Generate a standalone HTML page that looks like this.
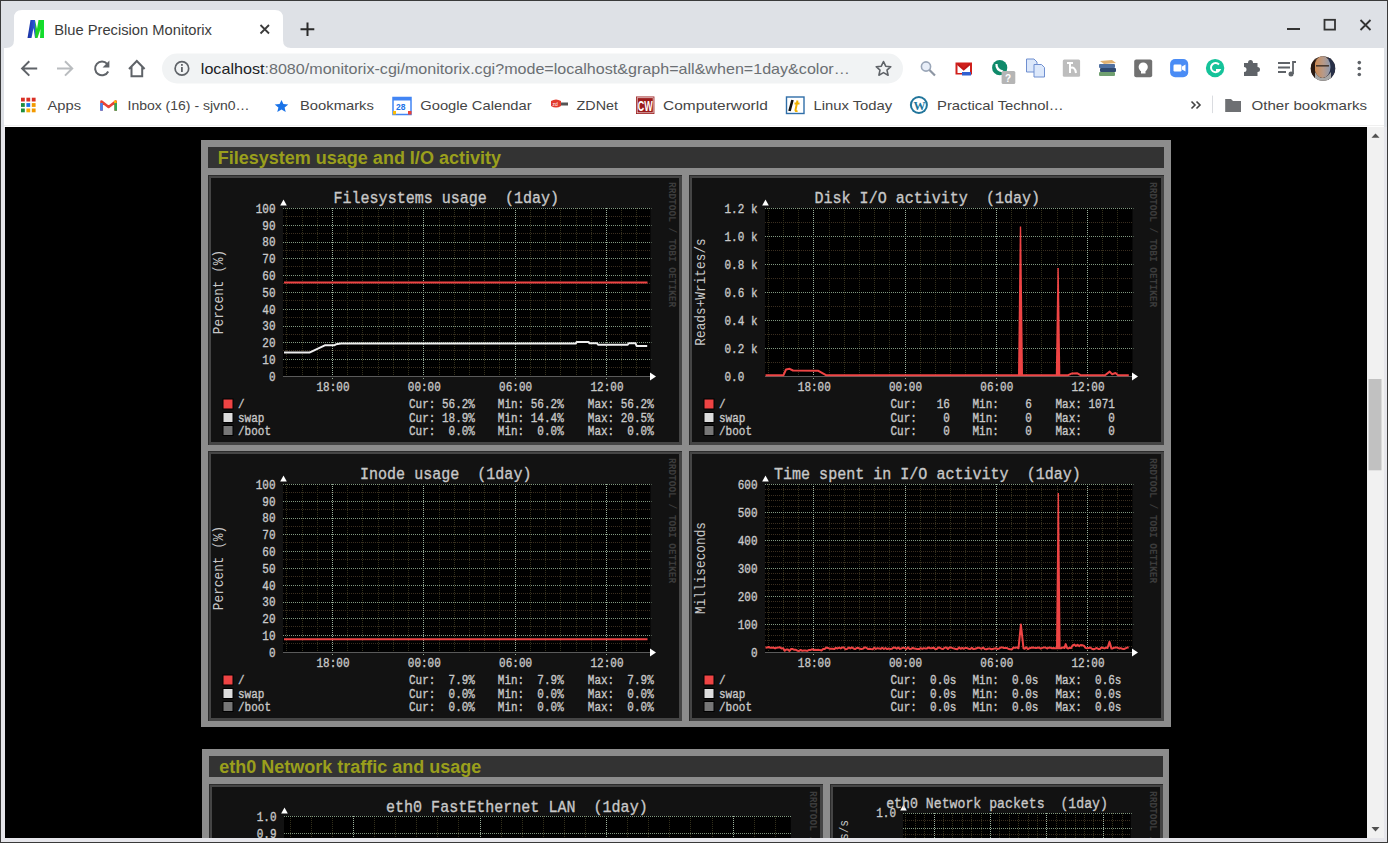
<!DOCTYPE html>
<html><head><meta charset="utf-8"><title>Blue Precision Monitorix</title>
<style>
html,body{margin:0;padding:0;width:1388px;height:843px;overflow:hidden;background:#dee1e6;}
</style></head><body>
<svg width="1388" height="843" style="position:absolute;left:0;top:0;font-family:'Liberation Sans', sans-serif">
<rect x="0" y="0" width="1388" height="843" fill="#dee1e6"/>
<rect x="1" y="127" width="4" height="716" fill="#e6e6eb"/>
<rect x="1383" y="127" width="4" height="716" fill="#e6e6eb"/>
<rect x="1" y="838" width="1386" height="4" fill="#e6e6eb"/>
<rect x="0" y="0" width="1388" height="1" fill="#3a3a3a"/>
<rect x="0" y="0" width="1" height="843" fill="#3a3a3a"/>
<rect x="1387" y="0" width="1" height="843" fill="#3a3a3a"/>
<rect x="0" y="842" width="1388" height="1" fill="#3a3a3a"/>
<rect x="4" y="48" width="1380" height="79" fill="#ffffff"/>
<rect x="4" y="125" width="1380" height="1" fill="#f0f0f0"/>
<path d="M6,48 Q14,48 14,40 L14,18 Q14,10 22,10 L275,10 Q283,10 283,18 L283,40 Q283,48 291,48 Z" fill="#ffffff"/>
<defs><linearGradient id="mg" x1="0" x2="1" y1="0" y2="0"><stop offset="0" stop-color="#1a2fa0"/><stop offset="0.45" stop-color="#2a5ad8"/><stop offset="0.5" stop-color="#20d020"/><stop offset="1" stop-color="#10e030"/></linearGradient></defs>
<path d="M27.5,38 L30.5,20 L35,20 L37,29 L38.5,20 L44,20 L44,38 L40,38 L40.5,29 L37.5,38 L35,38 L33.5,28 L31.5,38 Z" fill="url(#mg)"/>
<text x="54.2" y="35" font-size="15" fill="#3c3c3c" font-weight="normal" textLength="157.8" lengthAdjust="spacingAndGlyphs">Blue Precision Monitorix</text>
<path d="M260.5,25 L269,33.5 M269,25 L260.5,33.5" stroke="#3c3c3c" stroke-width="1.8"/>
<path d="M307.5,22.5 L307.5,36 M300.5,29.2 L314.3,29.2" stroke="#2a2a2a" stroke-width="2"/>
<rect x="1287" y="28" width="13" height="2" fill="#333"/>
<rect x="1324.5" y="19.8" width="10.5" height="9.8" fill="none" stroke="#333" stroke-width="1.8"/>
<path d="M1360.5,20 L1370.5,30 M1370.5,20 L1360.5,30" stroke="#333" stroke-width="1.8"/>
<path d="M37.2,68.4 L22.5,68.4 M29.3,61.2 L22.1,68.4 L29.3,75.6" fill="none" stroke="#5f6368" stroke-width="2"/>
<path d="M57,68.4 L71.7,68.4 M65,61.2 L72.2,68.4 L65,75.6" fill="none" stroke="#b9bcbf" stroke-width="2"/>
<path d="M107.2,63.8 A6.9,6.9 0 1 0 108.2,71.5" fill="none" stroke="#5f6368" stroke-width="2"/>
<polygon points="109.4,60.6 109.4,67.4 102.6,67.4" fill="#5f6368"/>
<path d="M129,69 L136.8,61 L144.6,69 M131.5,67 L131.5,76.2 L142.2,76.2 L142.2,67" fill="none" stroke="#5f6368" stroke-width="2"/>
<rect x="162" y="53.5" width="741" height="30" rx="15" fill="#f1f3f4"/>
<circle cx="181.9" cy="68.4" r="6.8" fill="none" stroke="#5f6368" stroke-width="1.7"/>
<rect x="181" y="67" width="1.8" height="5" fill="#5f6368"/><rect x="181" y="64" width="1.8" height="1.8" fill="#5f6368"/>
<text x="200.8" y="73.6" font-size="15" fill="#202124" font-weight="normal" textLength="63.7" lengthAdjust="spacingAndGlyphs">localhost</text>
<text x="264.5" y="73.6" font-size="15" fill="#6b6f73" font-weight="normal" textLength="585.3" lengthAdjust="spacingAndGlyphs">:8080/monitorix-cgi/monitorix.cgi?mode=localhost&amp;graph=all&amp;when=1day&amp;color…</text>
<path d="M883.5,61.5 L885.7,66.2 L890.8,66.7 L887,70.1 L888.1,75.2 L883.5,72.6 L878.9,75.2 L880,70.1 L876.2,66.7 L881.3,66.2 Z" fill="none" stroke="#5f6368" stroke-width="1.6" stroke-linejoin="round"/>
<circle cx="926" cy="66.5" r="4.6" fill="#e8eef8" stroke="#9aa6b8" stroke-width="1.6"/><path d="M929.5,70 L935,75.5" stroke="#8d96a3" stroke-width="2.2"/>
<rect x="955.5" y="62.5" width="16.5" height="12" fill="#d0201c"/><path d="M957.5,64 L963.7,69.5 L970,64 L970,73 L957.5,73 Z" fill="#ffffff"/><path d="M957.5,64 L963.7,69.5 L970,64" fill="none" stroke="#c01818" stroke-width="2"/><rect x="962" y="72" width="9" height="3.5" fill="#3060d0"/>
<circle cx="999.7" cy="67.7" r="7.6" fill="#0f8a6a"/><path d="M996.5,64 Q996,70 1003,71.5" stroke="#fff" stroke-width="2.2" fill="none"/><rect x="1001.6" y="71" width="13.7" height="12.9" rx="1.5" fill="#b5b5b5"/><text x="1005" y="81.5" font-size="10" font-weight="bold" fill="#fff">?</text>
<path d="M1026.5,59 L1034,59 L1037,62 L1037,72 L1026.5,72 Z" fill="#dce8fb" stroke="#6f8fd0" stroke-width="1"/><path d="M1034,64.5 L1041.5,64.5 L1044.5,67.5 L1044.5,77 L1034,77 Z" fill="#dce8fb" stroke="#6f8fd0" stroke-width="1"/>
<rect x="1062.8" y="59.4" width="17.3" height="17.3" rx="1.5" fill="#bdbdbd"/><path d="M1067,63 L1073,63 M1070,63 L1070,73 M1070,68 Q1075,66 1076,73" stroke="#fff" stroke-width="2" fill="none"/>
<path d="M1100,61 L1112,60 L1116,63 L1104,64 Z" fill="#e0b070"/><rect x="1099" y="64" width="16" height="4" rx="1" fill="#5070a0"/><rect x="1100" y="68" width="16" height="4" rx="1" fill="#304a70"/><rect x="1099" y="72" width="16" height="4" rx="1" fill="#70a070"/>
<rect x="1134.2" y="59.5" width="18" height="17.7" rx="2" fill="#717171"/><circle cx="1143.2" cy="67" r="4.6" fill="#fff"/><rect x="1141" y="70" width="4.5" height="3.5" fill="#fff"/>
<rect x="1170.1" y="59.1" width="18.1" height="18.1" rx="5" fill="#4a8cf5"/><rect x="1173.5" y="64.5" width="8" height="7" rx="1.2" fill="#fff"/><polygon points="1182,66.5 1185.5,64.5 1185.5,71.5 1182,69.5" fill="#fff"/>
<circle cx="1215.1" cy="68.1" r="9.2" fill="#15c39a"/><path d="M1219,64.5 A4.6,4.6 0 1 0 1219.5,70 L1216,70" fill="none" stroke="#fff" stroke-width="2"/>
<path d="M1244,63 L1248,63 Q1248,60 1250.5,60 Q1253,60 1253,63 L1257.5,63 L1257.5,67 Q1260,67 1260,69.5 Q1260,72 1257.5,72 L1257.5,76 L1244,76 L1244,72 Q1246.5,72 1246.5,69.5 Q1246.5,67 1244,67 Z" fill="#5f6368"/>
<path d="M1278,63 L1290,63 M1278,67.5 L1290,67.5 M1278,72 L1286,72" stroke="#5f6368" stroke-width="1.8"/><path d="M1293,74 L1293,62 L1296,62" stroke="#5f6368" stroke-width="1.8" fill="none"/><circle cx="1291" cy="74" r="2.5" fill="#5f6368"/>
<defs><linearGradient id="avf" x1="0" x2="1" y1="0" y2="0"><stop offset="0" stop-color="#d08a50"/><stop offset="0.55" stop-color="#b89a88"/><stop offset="1" stop-color="#8a98b0"/></linearGradient><clipPath id="avc"><circle cx="1323" cy="68.5" r="12.2"/></clipPath></defs>
<g clip-path="url(#avc)"><rect x="1310" y="56" width="26" height="26" fill="#3a2a22"/><rect x="1328" y="56" width="8" height="26" fill="#283048"/><ellipse cx="1322.5" cy="67" rx="8" ry="11" fill="url(#avf)"/><path d="M1315,72 Q1322,84 1331,72 L1331,82 L1315,82 Z" fill="#a8a8a8"/><rect x="1316" y="65" width="13" height="1.6" fill="#4a3a30"/><rect x="1310" y="56" width="5" height="26" fill="#2a1a12"/></g>
<circle cx="1359.3" cy="62.6" r="1.8" fill="#5f6368"/><circle cx="1359.3" cy="68.5" r="1.8" fill="#5f6368"/><circle cx="1359.3" cy="74.5" r="1.8" fill="#5f6368"/>
<rect x="21.0" y="97.7" width="3.8" height="3.8" fill="#d93025"/>
<rect x="26.4" y="97.7" width="3.8" height="3.8" fill="#d93025"/>
<rect x="31.8" y="97.7" width="3.8" height="3.8" fill="#d93025"/>
<rect x="21.0" y="103.1" width="3.8" height="3.8" fill="#1e8e3e"/>
<rect x="26.4" y="103.1" width="3.8" height="3.8" fill="#1a73e8"/>
<rect x="31.8" y="103.1" width="3.8" height="3.8" fill="#f29900"/>
<rect x="21.0" y="108.5" width="3.8" height="3.8" fill="#1e8e3e"/>
<rect x="26.4" y="108.5" width="3.8" height="3.8" fill="#f9ab00"/>
<rect x="31.8" y="108.5" width="3.8" height="3.8" fill="#f29900"/>
<text x="47.5" y="110.4" font-size="13.4" fill="#454545" font-weight="normal" textLength="33.5" lengthAdjust="spacingAndGlyphs">Apps</text>
<path d="M101.5,110.7 L101.5,101.5 L108.6,107 L115.7,101.5 L115.7,110.7" fill="none" stroke="#ea4335" stroke-width="2.6" stroke-linejoin="round"/><path d="M101.5,110.7 L101.5,103" stroke="#4285f4" stroke-width="2.6"/><path d="M115.7,110.7 L115.7,103" stroke="#34a853" stroke-width="2.6"/><path d="M114,102 L116.5,101.5" stroke="#fbbc04" stroke-width="2.6"/>
<text x="127.5" y="110.4" font-size="13.4" fill="#454545" font-weight="normal" textLength="122.1" lengthAdjust="spacingAndGlyphs">Inbox (16) - sjvn0…</text>
<path d="M281.5,99.9 L283.4,104 L288.3,104.4 L284.6,107.5 L285.7,112 L281.5,109.6 L277.3,112 L278.4,107.5 L274.7,104.4 L279.6,104 Z" fill="#1a73e8"/>
<text x="300" y="110.4" font-size="13.4" fill="#454545" font-weight="normal" textLength="73.9" lengthAdjust="spacingAndGlyphs">Bookmarks</text>
<rect x="393" y="97.5" width="18" height="17" fill="#ffffff" stroke="#4285f4" stroke-width="1.5"/><rect x="393" y="97.5" width="18" height="3" fill="#4285f4"/><rect x="408" y="111" width="3.5" height="3.5" fill="#ea4335"/><rect x="393" y="111" width="3" height="3.5" fill="#fbbc04"/><text x="396" y="110" font-size="8.5" fill="#1a73e8" font-weight="bold">28</text>
<text x="420.3" y="110.4" font-size="13.4" fill="#454545" font-weight="normal" textLength="111.3" lengthAdjust="spacingAndGlyphs">Google Calendar</text>
<path d="M551,101 Q556,98 561,101 L561,106 Q556,109 551,106 Z" fill="#e23b2e"/><rect x="561" y="102.5" width="7" height="3" fill="#555"/><text x="552.5" y="105.5" font-size="5" fill="#fff">zd</text>
<text x="576.6" y="110.4" font-size="13.4" fill="#454545" font-weight="normal" textLength="41.4" lengthAdjust="spacingAndGlyphs">ZDNet</text>
<rect x="636" y="96.5" width="18.4" height="17.5" fill="#9b1c1c"/><rect x="637.2" y="97.7" width="16" height="15.1" fill="none" stroke="#e8d0d0" stroke-width="0.8"/><text x="637.8" y="111.3" font-size="14.5" font-weight="bold" fill="#fff" textLength="14.8" lengthAdjust="spacingAndGlyphs">CW</text>
<text x="663" y="110.4" font-size="13.4" fill="#454545" font-weight="normal" textLength="104.8" lengthAdjust="spacingAndGlyphs">Computerworld</text>
<rect x="786.5" y="97" width="17.5" height="16.5" fill="#fff" stroke="#2f6ea8" stroke-width="1.4"/><path d="M792.5,100 L789.5,111" stroke="#111" stroke-width="2.6"/><path d="M797.5,100.5 L795.5,110 Q795.2,111.5 797.5,111 M794.5,103.5 L799.5,103.5" stroke="#f0b000" stroke-width="2" fill="none"/>
<text x="813.4" y="110.4" font-size="13.4" fill="#454545" font-weight="normal" textLength="78.9" lengthAdjust="spacingAndGlyphs">Linux Today</text>
<circle cx="918.9" cy="105" r="9" fill="#21759b"/><circle cx="918.9" cy="105" r="7" fill="#fff"/><text x="913.5" y="109.6" font-size="12" font-weight="bold" fill="#21759b" font-family='"Liberation Serif", serif'>W</text>
<text x="937" y="110.4" font-size="13.4" fill="#454545" font-weight="normal" textLength="126.5" lengthAdjust="spacingAndGlyphs">Practical Technol…</text>
<path d="M1191.5,101.5 L1195,105 L1191.5,108.5 M1196.5,101.5 L1200,105 L1196.5,108.5" fill="none" stroke="#454545" stroke-width="1.6"/>
<rect x="1212" y="95.6" width="1" height="17.5" fill="#dadce0"/>
<path d="M1225.2,99 L1231,99 L1233,101 L1241,101 L1241,112 L1225.2,112 Z" fill="#6e7073"/>
<text x="1251.6" y="110.4" font-size="13.4" fill="#454545" font-weight="normal" textLength="115.4" lengthAdjust="spacingAndGlyphs">Other bookmarks</text>
<rect x="1367" y="127" width="17" height="711" fill="#f1f1f1"/>
<rect x="1368.5" y="379" width="13" height="91.3" fill="#c1c1c1"/>
<polygon points="1371.5,137.8 1375.5,133.5 1379.5,137.8" fill="#505050"/>
<polygon points="1371.5,827 1379.5,827 1375.5,831.5" fill="#505050"/>
</svg>
<svg width="1362" height="711" viewBox="5 127 1362 711" style="position:absolute;left:5px;top:127px;font-family:'Liberation Mono', monospace">
<rect x="5" y="127" width="1362" height="711" fill="#000000" />
<rect x="201" y="140" width="970" height="587" fill="#8c8c8c" />
<rect x="208" y="147" width="956" height="21" fill="#333333" />
<text x="217.8" y="164" font-family="'Liberation Sans', sans-serif" font-weight="bold" font-size="18" fill="#9a9f1c">Filesystem usage and I/O activity</text>
<rect x="208" y="175" width="474" height="270" fill="#2c2c2c" />
<rect x="209" y="176" width="473" height="269" fill="#454545" />
<rect x="211" y="178" width="468" height="264" fill="#121212" />
<rect x="283" y="208" width="367.5" height="169" fill="#000000" />
<line x1="283" y1="367.5" x2="650.5" y2="367.5" stroke="#3a2e20" stroke-dasharray="1 1"/>
<line x1="283" y1="350.5" x2="650.5" y2="350.5" stroke="#3a2e20" stroke-dasharray="1 1"/>
<line x1="283" y1="334.5" x2="650.5" y2="334.5" stroke="#3a2e20" stroke-dasharray="1 1"/>
<line x1="283" y1="317.5" x2="650.5" y2="317.5" stroke="#3a2e20" stroke-dasharray="1 1"/>
<line x1="283" y1="300.5" x2="650.5" y2="300.5" stroke="#3a2e20" stroke-dasharray="1 1"/>
<line x1="283" y1="283.5" x2="650.5" y2="283.5" stroke="#3a2e20" stroke-dasharray="1 1"/>
<line x1="283" y1="266.5" x2="650.5" y2="266.5" stroke="#3a2e20" stroke-dasharray="1 1"/>
<line x1="283" y1="250.5" x2="650.5" y2="250.5" stroke="#3a2e20" stroke-dasharray="1 1"/>
<line x1="283" y1="233.5" x2="650.5" y2="233.5" stroke="#3a2e20" stroke-dasharray="1 1"/>
<line x1="283" y1="216.5" x2="650.5" y2="216.5" stroke="#3a2e20" stroke-dasharray="1 1"/>
<line x1="286.5" y1="208" x2="286.5" y2="377" stroke="#33301c" stroke-dasharray="1 1"/>
<line x1="302.5" y1="208" x2="302.5" y2="377" stroke="#33301c" stroke-dasharray="1 1"/>
<line x1="317.5" y1="208" x2="317.5" y2="377" stroke="#33301c" stroke-dasharray="1 1"/>
<line x1="332.5" y1="208" x2="332.5" y2="377" stroke="#33301c" stroke-dasharray="1 1"/>
<line x1="347.5" y1="208" x2="347.5" y2="377" stroke="#33301c" stroke-dasharray="1 1"/>
<line x1="362.5" y1="208" x2="362.5" y2="377" stroke="#33301c" stroke-dasharray="1 1"/>
<line x1="378.5" y1="208" x2="378.5" y2="377" stroke="#33301c" stroke-dasharray="1 1"/>
<line x1="393.5" y1="208" x2="393.5" y2="377" stroke="#33301c" stroke-dasharray="1 1"/>
<line x1="408.5" y1="208" x2="408.5" y2="377" stroke="#33301c" stroke-dasharray="1 1"/>
<line x1="423.5" y1="208" x2="423.5" y2="377" stroke="#33301c" stroke-dasharray="1 1"/>
<line x1="439.5" y1="208" x2="439.5" y2="377" stroke="#33301c" stroke-dasharray="1 1"/>
<line x1="454.5" y1="208" x2="454.5" y2="377" stroke="#33301c" stroke-dasharray="1 1"/>
<line x1="469.5" y1="208" x2="469.5" y2="377" stroke="#33301c" stroke-dasharray="1 1"/>
<line x1="484.5" y1="208" x2="484.5" y2="377" stroke="#33301c" stroke-dasharray="1 1"/>
<line x1="499.5" y1="208" x2="499.5" y2="377" stroke="#33301c" stroke-dasharray="1 1"/>
<line x1="515.5" y1="208" x2="515.5" y2="377" stroke="#33301c" stroke-dasharray="1 1"/>
<line x1="530.5" y1="208" x2="530.5" y2="377" stroke="#33301c" stroke-dasharray="1 1"/>
<line x1="545.5" y1="208" x2="545.5" y2="377" stroke="#33301c" stroke-dasharray="1 1"/>
<line x1="560.5" y1="208" x2="560.5" y2="377" stroke="#33301c" stroke-dasharray="1 1"/>
<line x1="576.5" y1="208" x2="576.5" y2="377" stroke="#33301c" stroke-dasharray="1 1"/>
<line x1="591.5" y1="208" x2="591.5" y2="377" stroke="#33301c" stroke-dasharray="1 1"/>
<line x1="606.5" y1="208" x2="606.5" y2="377" stroke="#33301c" stroke-dasharray="1 1"/>
<line x1="621.5" y1="208" x2="621.5" y2="377" stroke="#33301c" stroke-dasharray="1 1"/>
<line x1="636.5" y1="208" x2="636.5" y2="377" stroke="#33301c" stroke-dasharray="1 1"/>
<line x1="332.5" y1="208" x2="332.5" y2="380" stroke="#9cb09c" stroke-dasharray="1 1"/>
<line x1="423.5" y1="208" x2="423.5" y2="380" stroke="#9cb09c" stroke-dasharray="1 1"/>
<line x1="515.5" y1="208" x2="515.5" y2="380" stroke="#9cb09c" stroke-dasharray="1 1"/>
<line x1="606.5" y1="208" x2="606.5" y2="380" stroke="#9cb09c" stroke-dasharray="1 1"/>
<line x1="283" y1="359.5" x2="651.5" y2="359.5" stroke="#7f967f" stroke-dasharray="1 1"/>
<line x1="283" y1="342.5" x2="651.5" y2="342.5" stroke="#7f967f" stroke-dasharray="1 1"/>
<line x1="283" y1="326.5" x2="651.5" y2="326.5" stroke="#7f967f" stroke-dasharray="1 1"/>
<line x1="283" y1="309.5" x2="651.5" y2="309.5" stroke="#7f967f" stroke-dasharray="1 1"/>
<line x1="283" y1="292.5" x2="651.5" y2="292.5" stroke="#7f967f" stroke-dasharray="1 1"/>
<line x1="283" y1="275.5" x2="651.5" y2="275.5" stroke="#7f967f" stroke-dasharray="1 1"/>
<line x1="283" y1="258.5" x2="651.5" y2="258.5" stroke="#7f967f" stroke-dasharray="1 1"/>
<line x1="283" y1="242.5" x2="651.5" y2="242.5" stroke="#7f967f" stroke-dasharray="1 1"/>
<line x1="283" y1="225.5" x2="651.5" y2="225.5" stroke="#7f967f" stroke-dasharray="1 1"/>
<line x1="283" y1="208.5" x2="651.5" y2="208.5" stroke="#7f967f" stroke-dasharray="1 1"/>
<line x1="283" y1="376.5" x2="650.5" y2="376.5" stroke="#5a5a5a"/>
<polygon points="650.0,372.5 656.0,376.5 650.0,380.5" fill="#ffffff"/>
<polygon points="280.2,205.5 283.5,199.5 286.8,205.5" fill="#ffffff"/>
<text transform="translate(275.5,380.7) scale(1,1.15)" font-size="11.0" fill="#c8c8c8" stroke="#c8c8c8" stroke-width="0.3" text-anchor="end" xml:space="preserve">0</text>
<text transform="translate(275.5,363.9) scale(1,1.15)" font-size="11.0" fill="#c8c8c8" stroke="#c8c8c8" stroke-width="0.3" text-anchor="end" xml:space="preserve">10</text>
<text transform="translate(275.5,347.09999999999997) scale(1,1.15)" font-size="11.0" fill="#c8c8c8" stroke="#c8c8c8" stroke-width="0.3" text-anchor="end" xml:space="preserve">20</text>
<text transform="translate(275.5,330.3) scale(1,1.15)" font-size="11.0" fill="#c8c8c8" stroke="#c8c8c8" stroke-width="0.3" text-anchor="end" xml:space="preserve">30</text>
<text transform="translate(275.5,313.5) scale(1,1.15)" font-size="11.0" fill="#c8c8c8" stroke="#c8c8c8" stroke-width="0.3" text-anchor="end" xml:space="preserve">40</text>
<text transform="translate(275.5,296.7) scale(1,1.15)" font-size="11.0" fill="#c8c8c8" stroke="#c8c8c8" stroke-width="0.3" text-anchor="end" xml:space="preserve">50</text>
<text transform="translate(275.5,279.9) scale(1,1.15)" font-size="11.0" fill="#c8c8c8" stroke="#c8c8c8" stroke-width="0.3" text-anchor="end" xml:space="preserve">60</text>
<text transform="translate(275.5,263.09999999999997) scale(1,1.15)" font-size="11.0" fill="#c8c8c8" stroke="#c8c8c8" stroke-width="0.3" text-anchor="end" xml:space="preserve">70</text>
<text transform="translate(275.5,246.29999999999998) scale(1,1.15)" font-size="11.0" fill="#c8c8c8" stroke="#c8c8c8" stroke-width="0.3" text-anchor="end" xml:space="preserve">80</text>
<text transform="translate(275.5,229.49999999999997) scale(1,1.15)" font-size="11.0" fill="#c8c8c8" stroke="#c8c8c8" stroke-width="0.3" text-anchor="end" xml:space="preserve">90</text>
<text transform="translate(275.5,212.7) scale(1,1.15)" font-size="11.0" fill="#c8c8c8" stroke="#c8c8c8" stroke-width="0.3" text-anchor="end" xml:space="preserve">100</text>
<text transform="translate(333.0,390.6) scale(1,1.15)" font-size="11.0" fill="#c8c8c8" stroke="#c8c8c8" stroke-width="0.3" text-anchor="middle" xml:space="preserve">18:00</text>
<text transform="translate(424.3,390.6) scale(1,1.15)" font-size="11.0" fill="#c8c8c8" stroke="#c8c8c8" stroke-width="0.3" text-anchor="middle" xml:space="preserve">00:00</text>
<text transform="translate(515.6,390.6) scale(1,1.15)" font-size="11.0" fill="#c8c8c8" stroke="#c8c8c8" stroke-width="0.3" text-anchor="middle" xml:space="preserve">06:00</text>
<text transform="translate(607.0,390.6) scale(1,1.15)" font-size="11.0" fill="#c8c8c8" stroke="#c8c8c8" stroke-width="0.3" text-anchor="middle" xml:space="preserve">12:00</text>
<text transform="translate(333.5,202.8) scale(1,1.15)" font-size="15.05" fill="#c8c8c8" stroke="#c8c8c8" stroke-width="0.3" text-anchor="start" xml:space="preserve">Filesystems usage  (1day)</text>
<text transform="translate(222.5,292) rotate(-90) scale(1,1.12)" font-size="12.8" fill="#c8c8c8" text-anchor="middle">Percent (%)</text>
<text transform="translate(669,182) rotate(90) scale(1,1.1)" font-size="9.5" font-weight="bold" fill="#3c3c3c">RRDTOOL / TOBI OETIKER</text>
<path d="M284.0,282.6 L647.5,282.6" fill="none" stroke="#ee4444" stroke-width="2" stroke-linejoin="round"/>
<path d="M284.0,352.6 L309.4,352.6 L324.8,345.3 L334.1,345.3 L336.0,344.3 L341.0,343.5 L575.8,343.5 L576.8,341.9 L588.5,341.9 L589.5,343.3 L597.1,343.3 L598.1,344.8 L627.7,344.8 L628.7,343.3 L635.6,343.3 L636.6,345.9 L647.2,345.9" fill="none" stroke="#eeeeee" stroke-width="2" stroke-linejoin="round"/>
<rect x="222.5" y="398.5" width="11" height="11" fill="#000000" />
<rect x="223.5" y="399.5" width="9" height="9" fill="#ee4444" />
<text transform="translate(238,408) scale(1,1.15)" font-size="11.0" fill="#c8c8c8" stroke="#c8c8c8" stroke-width="0.3" text-anchor="start" xml:space="preserve">/</text>
<text transform="translate(409,408) scale(1,1.15)" font-size="11.0" fill="#c8c8c8" stroke="#c8c8c8" stroke-width="0.3" text-anchor="start" xml:space="preserve">Cur: 56.2%</text>
<text transform="translate(497.8,408) scale(1,1.15)" font-size="11.0" fill="#c8c8c8" stroke="#c8c8c8" stroke-width="0.3" text-anchor="start" xml:space="preserve">Min: 56.2%</text>
<text transform="translate(587.8,408) scale(1,1.15)" font-size="11.0" fill="#c8c8c8" stroke="#c8c8c8" stroke-width="0.3" text-anchor="start" xml:space="preserve">Max: 56.2%</text>
<rect x="222.5" y="412.0" width="11" height="11" fill="#000000" />
<rect x="223.5" y="413.0" width="9" height="9" fill="#dddddd" />
<text transform="translate(238,421.5) scale(1,1.15)" font-size="11.0" fill="#c8c8c8" stroke="#c8c8c8" stroke-width="0.3" text-anchor="start" xml:space="preserve">swap</text>
<text transform="translate(409,421.5) scale(1,1.15)" font-size="11.0" fill="#c8c8c8" stroke="#c8c8c8" stroke-width="0.3" text-anchor="start" xml:space="preserve">Cur: 18.9%</text>
<text transform="translate(497.8,421.5) scale(1,1.15)" font-size="11.0" fill="#c8c8c8" stroke="#c8c8c8" stroke-width="0.3" text-anchor="start" xml:space="preserve">Min: 14.4%</text>
<text transform="translate(587.8,421.5) scale(1,1.15)" font-size="11.0" fill="#c8c8c8" stroke="#c8c8c8" stroke-width="0.3" text-anchor="start" xml:space="preserve">Max: 20.5%</text>
<rect x="222.5" y="425.0" width="11" height="11" fill="#000000" />
<rect x="223.5" y="426.0" width="9" height="9" fill="#777777" />
<text transform="translate(238,434.5) scale(1,1.15)" font-size="11.0" fill="#c8c8c8" stroke="#c8c8c8" stroke-width="0.3" text-anchor="start" xml:space="preserve">/boot</text>
<text transform="translate(409,434.5) scale(1,1.15)" font-size="11.0" fill="#c8c8c8" stroke="#c8c8c8" stroke-width="0.3" text-anchor="start" xml:space="preserve">Cur:  0.0%</text>
<text transform="translate(497.8,434.5) scale(1,1.15)" font-size="11.0" fill="#c8c8c8" stroke="#c8c8c8" stroke-width="0.3" text-anchor="start" xml:space="preserve">Min:  0.0%</text>
<text transform="translate(587.8,434.5) scale(1,1.15)" font-size="11.0" fill="#c8c8c8" stroke="#c8c8c8" stroke-width="0.3" text-anchor="start" xml:space="preserve">Max:  0.0%</text>
<rect x="208" y="451" width="474" height="270" fill="#2c2c2c" />
<rect x="209" y="452" width="473" height="269" fill="#454545" />
<rect x="211" y="454" width="468" height="264" fill="#121212" />
<rect x="283" y="484" width="367.5" height="169" fill="#000000" />
<line x1="283" y1="643.5" x2="650.5" y2="643.5" stroke="#3a2e20" stroke-dasharray="1 1"/>
<line x1="283" y1="626.5" x2="650.5" y2="626.5" stroke="#3a2e20" stroke-dasharray="1 1"/>
<line x1="283" y1="610.5" x2="650.5" y2="610.5" stroke="#3a2e20" stroke-dasharray="1 1"/>
<line x1="283" y1="593.5" x2="650.5" y2="593.5" stroke="#3a2e20" stroke-dasharray="1 1"/>
<line x1="283" y1="576.5" x2="650.5" y2="576.5" stroke="#3a2e20" stroke-dasharray="1 1"/>
<line x1="283" y1="559.5" x2="650.5" y2="559.5" stroke="#3a2e20" stroke-dasharray="1 1"/>
<line x1="283" y1="542.5" x2="650.5" y2="542.5" stroke="#3a2e20" stroke-dasharray="1 1"/>
<line x1="283" y1="526.5" x2="650.5" y2="526.5" stroke="#3a2e20" stroke-dasharray="1 1"/>
<line x1="283" y1="509.5" x2="650.5" y2="509.5" stroke="#3a2e20" stroke-dasharray="1 1"/>
<line x1="283" y1="492.5" x2="650.5" y2="492.5" stroke="#3a2e20" stroke-dasharray="1 1"/>
<line x1="286.5" y1="484" x2="286.5" y2="653" stroke="#33301c" stroke-dasharray="1 1"/>
<line x1="302.5" y1="484" x2="302.5" y2="653" stroke="#33301c" stroke-dasharray="1 1"/>
<line x1="317.5" y1="484" x2="317.5" y2="653" stroke="#33301c" stroke-dasharray="1 1"/>
<line x1="332.5" y1="484" x2="332.5" y2="653" stroke="#33301c" stroke-dasharray="1 1"/>
<line x1="347.5" y1="484" x2="347.5" y2="653" stroke="#33301c" stroke-dasharray="1 1"/>
<line x1="362.5" y1="484" x2="362.5" y2="653" stroke="#33301c" stroke-dasharray="1 1"/>
<line x1="378.5" y1="484" x2="378.5" y2="653" stroke="#33301c" stroke-dasharray="1 1"/>
<line x1="393.5" y1="484" x2="393.5" y2="653" stroke="#33301c" stroke-dasharray="1 1"/>
<line x1="408.5" y1="484" x2="408.5" y2="653" stroke="#33301c" stroke-dasharray="1 1"/>
<line x1="423.5" y1="484" x2="423.5" y2="653" stroke="#33301c" stroke-dasharray="1 1"/>
<line x1="439.5" y1="484" x2="439.5" y2="653" stroke="#33301c" stroke-dasharray="1 1"/>
<line x1="454.5" y1="484" x2="454.5" y2="653" stroke="#33301c" stroke-dasharray="1 1"/>
<line x1="469.5" y1="484" x2="469.5" y2="653" stroke="#33301c" stroke-dasharray="1 1"/>
<line x1="484.5" y1="484" x2="484.5" y2="653" stroke="#33301c" stroke-dasharray="1 1"/>
<line x1="499.5" y1="484" x2="499.5" y2="653" stroke="#33301c" stroke-dasharray="1 1"/>
<line x1="515.5" y1="484" x2="515.5" y2="653" stroke="#33301c" stroke-dasharray="1 1"/>
<line x1="530.5" y1="484" x2="530.5" y2="653" stroke="#33301c" stroke-dasharray="1 1"/>
<line x1="545.5" y1="484" x2="545.5" y2="653" stroke="#33301c" stroke-dasharray="1 1"/>
<line x1="560.5" y1="484" x2="560.5" y2="653" stroke="#33301c" stroke-dasharray="1 1"/>
<line x1="576.5" y1="484" x2="576.5" y2="653" stroke="#33301c" stroke-dasharray="1 1"/>
<line x1="591.5" y1="484" x2="591.5" y2="653" stroke="#33301c" stroke-dasharray="1 1"/>
<line x1="606.5" y1="484" x2="606.5" y2="653" stroke="#33301c" stroke-dasharray="1 1"/>
<line x1="621.5" y1="484" x2="621.5" y2="653" stroke="#33301c" stroke-dasharray="1 1"/>
<line x1="636.5" y1="484" x2="636.5" y2="653" stroke="#33301c" stroke-dasharray="1 1"/>
<line x1="332.5" y1="484" x2="332.5" y2="656" stroke="#9cb09c" stroke-dasharray="1 1"/>
<line x1="423.5" y1="484" x2="423.5" y2="656" stroke="#9cb09c" stroke-dasharray="1 1"/>
<line x1="515.5" y1="484" x2="515.5" y2="656" stroke="#9cb09c" stroke-dasharray="1 1"/>
<line x1="606.5" y1="484" x2="606.5" y2="656" stroke="#9cb09c" stroke-dasharray="1 1"/>
<line x1="283" y1="635.5" x2="651.5" y2="635.5" stroke="#7f967f" stroke-dasharray="1 1"/>
<line x1="283" y1="618.5" x2="651.5" y2="618.5" stroke="#7f967f" stroke-dasharray="1 1"/>
<line x1="283" y1="602.5" x2="651.5" y2="602.5" stroke="#7f967f" stroke-dasharray="1 1"/>
<line x1="283" y1="585.5" x2="651.5" y2="585.5" stroke="#7f967f" stroke-dasharray="1 1"/>
<line x1="283" y1="568.5" x2="651.5" y2="568.5" stroke="#7f967f" stroke-dasharray="1 1"/>
<line x1="283" y1="551.5" x2="651.5" y2="551.5" stroke="#7f967f" stroke-dasharray="1 1"/>
<line x1="283" y1="534.5" x2="651.5" y2="534.5" stroke="#7f967f" stroke-dasharray="1 1"/>
<line x1="283" y1="518.5" x2="651.5" y2="518.5" stroke="#7f967f" stroke-dasharray="1 1"/>
<line x1="283" y1="501.5" x2="651.5" y2="501.5" stroke="#7f967f" stroke-dasharray="1 1"/>
<line x1="283" y1="484.5" x2="651.5" y2="484.5" stroke="#7f967f" stroke-dasharray="1 1"/>
<line x1="283" y1="652.5" x2="650.5" y2="652.5" stroke="#5a5a5a"/>
<polygon points="650.0,648.5 656.0,652.5 650.0,656.5" fill="#ffffff"/>
<polygon points="280.2,481.5 283.5,475.5 286.8,481.5" fill="#ffffff"/>
<text transform="translate(275.5,656.7) scale(1,1.15)" font-size="11.0" fill="#c8c8c8" stroke="#c8c8c8" stroke-width="0.3" text-anchor="end" xml:space="preserve">0</text>
<text transform="translate(275.5,639.9000000000001) scale(1,1.15)" font-size="11.0" fill="#c8c8c8" stroke="#c8c8c8" stroke-width="0.3" text-anchor="end" xml:space="preserve">10</text>
<text transform="translate(275.5,623.1) scale(1,1.15)" font-size="11.0" fill="#c8c8c8" stroke="#c8c8c8" stroke-width="0.3" text-anchor="end" xml:space="preserve">20</text>
<text transform="translate(275.5,606.3000000000001) scale(1,1.15)" font-size="11.0" fill="#c8c8c8" stroke="#c8c8c8" stroke-width="0.3" text-anchor="end" xml:space="preserve">30</text>
<text transform="translate(275.5,589.5) scale(1,1.15)" font-size="11.0" fill="#c8c8c8" stroke="#c8c8c8" stroke-width="0.3" text-anchor="end" xml:space="preserve">40</text>
<text transform="translate(275.5,572.7) scale(1,1.15)" font-size="11.0" fill="#c8c8c8" stroke="#c8c8c8" stroke-width="0.3" text-anchor="end" xml:space="preserve">50</text>
<text transform="translate(275.5,555.9000000000001) scale(1,1.15)" font-size="11.0" fill="#c8c8c8" stroke="#c8c8c8" stroke-width="0.3" text-anchor="end" xml:space="preserve">60</text>
<text transform="translate(275.5,539.1) scale(1,1.15)" font-size="11.0" fill="#c8c8c8" stroke="#c8c8c8" stroke-width="0.3" text-anchor="end" xml:space="preserve">70</text>
<text transform="translate(275.5,522.3000000000001) scale(1,1.15)" font-size="11.0" fill="#c8c8c8" stroke="#c8c8c8" stroke-width="0.3" text-anchor="end" xml:space="preserve">80</text>
<text transform="translate(275.5,505.49999999999994) scale(1,1.15)" font-size="11.0" fill="#c8c8c8" stroke="#c8c8c8" stroke-width="0.3" text-anchor="end" xml:space="preserve">90</text>
<text transform="translate(275.5,488.7) scale(1,1.15)" font-size="11.0" fill="#c8c8c8" stroke="#c8c8c8" stroke-width="0.3" text-anchor="end" xml:space="preserve">100</text>
<text transform="translate(333.0,666.6) scale(1,1.15)" font-size="11.0" fill="#c8c8c8" stroke="#c8c8c8" stroke-width="0.3" text-anchor="middle" xml:space="preserve">18:00</text>
<text transform="translate(424.3,666.6) scale(1,1.15)" font-size="11.0" fill="#c8c8c8" stroke="#c8c8c8" stroke-width="0.3" text-anchor="middle" xml:space="preserve">00:00</text>
<text transform="translate(515.6,666.6) scale(1,1.15)" font-size="11.0" fill="#c8c8c8" stroke="#c8c8c8" stroke-width="0.3" text-anchor="middle" xml:space="preserve">06:00</text>
<text transform="translate(607.0,666.6) scale(1,1.15)" font-size="11.0" fill="#c8c8c8" stroke="#c8c8c8" stroke-width="0.3" text-anchor="middle" xml:space="preserve">12:00</text>
<text transform="translate(360,478.8) scale(1,1.15)" font-size="15.05" fill="#c8c8c8" stroke="#c8c8c8" stroke-width="0.3" text-anchor="start" xml:space="preserve">Inode usage  (1day)</text>
<text transform="translate(222.5,568) rotate(-90) scale(1,1.12)" font-size="12.8" fill="#c8c8c8" text-anchor="middle">Percent (%)</text>
<text transform="translate(669,458) rotate(90) scale(1,1.1)" font-size="9.5" font-weight="bold" fill="#3c3c3c">RRDTOOL / TOBI OETIKER</text>
<path d="M284.0,639.2 L647.5,639.2" fill="none" stroke="#ee4444" stroke-width="2" stroke-linejoin="round"/>
<rect x="222.5" y="674.5" width="11" height="11" fill="#000000" />
<rect x="223.5" y="675.5" width="9" height="9" fill="#ee4444" />
<text transform="translate(238,684) scale(1,1.15)" font-size="11.0" fill="#c8c8c8" stroke="#c8c8c8" stroke-width="0.3" text-anchor="start" xml:space="preserve">/</text>
<text transform="translate(409,684) scale(1,1.15)" font-size="11.0" fill="#c8c8c8" stroke="#c8c8c8" stroke-width="0.3" text-anchor="start" xml:space="preserve">Cur:  7.9%</text>
<text transform="translate(497.8,684) scale(1,1.15)" font-size="11.0" fill="#c8c8c8" stroke="#c8c8c8" stroke-width="0.3" text-anchor="start" xml:space="preserve">Min:  7.9%</text>
<text transform="translate(587.8,684) scale(1,1.15)" font-size="11.0" fill="#c8c8c8" stroke="#c8c8c8" stroke-width="0.3" text-anchor="start" xml:space="preserve">Max:  7.9%</text>
<rect x="222.5" y="688.0" width="11" height="11" fill="#000000" />
<rect x="223.5" y="689.0" width="9" height="9" fill="#dddddd" />
<text transform="translate(238,697.5) scale(1,1.15)" font-size="11.0" fill="#c8c8c8" stroke="#c8c8c8" stroke-width="0.3" text-anchor="start" xml:space="preserve">swap</text>
<text transform="translate(409,697.5) scale(1,1.15)" font-size="11.0" fill="#c8c8c8" stroke="#c8c8c8" stroke-width="0.3" text-anchor="start" xml:space="preserve">Cur:  0.0%</text>
<text transform="translate(497.8,697.5) scale(1,1.15)" font-size="11.0" fill="#c8c8c8" stroke="#c8c8c8" stroke-width="0.3" text-anchor="start" xml:space="preserve">Min:  0.0%</text>
<text transform="translate(587.8,697.5) scale(1,1.15)" font-size="11.0" fill="#c8c8c8" stroke="#c8c8c8" stroke-width="0.3" text-anchor="start" xml:space="preserve">Max:  0.0%</text>
<rect x="222.5" y="701.0" width="11" height="11" fill="#000000" />
<rect x="223.5" y="702.0" width="9" height="9" fill="#777777" />
<text transform="translate(238,710.5) scale(1,1.15)" font-size="11.0" fill="#c8c8c8" stroke="#c8c8c8" stroke-width="0.3" text-anchor="start" xml:space="preserve">/boot</text>
<text transform="translate(409,710.5) scale(1,1.15)" font-size="11.0" fill="#c8c8c8" stroke="#c8c8c8" stroke-width="0.3" text-anchor="start" xml:space="preserve">Cur:  0.0%</text>
<text transform="translate(497.8,710.5) scale(1,1.15)" font-size="11.0" fill="#c8c8c8" stroke="#c8c8c8" stroke-width="0.3" text-anchor="start" xml:space="preserve">Min:  0.0%</text>
<text transform="translate(587.8,710.5) scale(1,1.15)" font-size="11.0" fill="#c8c8c8" stroke="#c8c8c8" stroke-width="0.3" text-anchor="start" xml:space="preserve">Max:  0.0%</text>
<rect x="689" y="175" width="475" height="270" fill="#2c2c2c" />
<rect x="690" y="176" width="474" height="269" fill="#454545" />
<rect x="692" y="178" width="469" height="264" fill="#121212" />
<rect x="765" y="208" width="367.5" height="169" fill="#000000" />
<line x1="765" y1="362.5" x2="1132.5" y2="362.5" stroke="#3a2e20" stroke-dasharray="1 1"/>
<line x1="765" y1="334.5" x2="1132.5" y2="334.5" stroke="#3a2e20" stroke-dasharray="1 1"/>
<line x1="765" y1="306.5" x2="1132.5" y2="306.5" stroke="#3a2e20" stroke-dasharray="1 1"/>
<line x1="765" y1="278.5" x2="1132.5" y2="278.5" stroke="#3a2e20" stroke-dasharray="1 1"/>
<line x1="765" y1="250.5" x2="1132.5" y2="250.5" stroke="#3a2e20" stroke-dasharray="1 1"/>
<line x1="765" y1="222.5" x2="1132.5" y2="222.5" stroke="#3a2e20" stroke-dasharray="1 1"/>
<line x1="768.5" y1="208" x2="768.5" y2="377" stroke="#33301c" stroke-dasharray="1 1"/>
<line x1="783.5" y1="208" x2="783.5" y2="377" stroke="#33301c" stroke-dasharray="1 1"/>
<line x1="798.5" y1="208" x2="798.5" y2="377" stroke="#33301c" stroke-dasharray="1 1"/>
<line x1="813.5" y1="208" x2="813.5" y2="377" stroke="#33301c" stroke-dasharray="1 1"/>
<line x1="829.5" y1="208" x2="829.5" y2="377" stroke="#33301c" stroke-dasharray="1 1"/>
<line x1="844.5" y1="208" x2="844.5" y2="377" stroke="#33301c" stroke-dasharray="1 1"/>
<line x1="859.5" y1="208" x2="859.5" y2="377" stroke="#33301c" stroke-dasharray="1 1"/>
<line x1="874.5" y1="208" x2="874.5" y2="377" stroke="#33301c" stroke-dasharray="1 1"/>
<line x1="889.5" y1="208" x2="889.5" y2="377" stroke="#33301c" stroke-dasharray="1 1"/>
<line x1="905.5" y1="208" x2="905.5" y2="377" stroke="#33301c" stroke-dasharray="1 1"/>
<line x1="920.5" y1="208" x2="920.5" y2="377" stroke="#33301c" stroke-dasharray="1 1"/>
<line x1="935.5" y1="208" x2="935.5" y2="377" stroke="#33301c" stroke-dasharray="1 1"/>
<line x1="950.5" y1="208" x2="950.5" y2="377" stroke="#33301c" stroke-dasharray="1 1"/>
<line x1="965.5" y1="208" x2="965.5" y2="377" stroke="#33301c" stroke-dasharray="1 1"/>
<line x1="981.5" y1="208" x2="981.5" y2="377" stroke="#33301c" stroke-dasharray="1 1"/>
<line x1="996.5" y1="208" x2="996.5" y2="377" stroke="#33301c" stroke-dasharray="1 1"/>
<line x1="1011.5" y1="208" x2="1011.5" y2="377" stroke="#33301c" stroke-dasharray="1 1"/>
<line x1="1026.5" y1="208" x2="1026.5" y2="377" stroke="#33301c" stroke-dasharray="1 1"/>
<line x1="1041.5" y1="208" x2="1041.5" y2="377" stroke="#33301c" stroke-dasharray="1 1"/>
<line x1="1057.5" y1="208" x2="1057.5" y2="377" stroke="#33301c" stroke-dasharray="1 1"/>
<line x1="1072.5" y1="208" x2="1072.5" y2="377" stroke="#33301c" stroke-dasharray="1 1"/>
<line x1="1087.5" y1="208" x2="1087.5" y2="377" stroke="#33301c" stroke-dasharray="1 1"/>
<line x1="1102.5" y1="208" x2="1102.5" y2="377" stroke="#33301c" stroke-dasharray="1 1"/>
<line x1="1117.5" y1="208" x2="1117.5" y2="377" stroke="#33301c" stroke-dasharray="1 1"/>
<line x1="813.5" y1="208" x2="813.5" y2="380" stroke="#9cb09c" stroke-dasharray="1 1"/>
<line x1="905.5" y1="208" x2="905.5" y2="380" stroke="#9cb09c" stroke-dasharray="1 1"/>
<line x1="996.5" y1="208" x2="996.5" y2="380" stroke="#9cb09c" stroke-dasharray="1 1"/>
<line x1="1087.5" y1="208" x2="1087.5" y2="380" stroke="#9cb09c" stroke-dasharray="1 1"/>
<line x1="765" y1="348.5" x2="1133.5" y2="348.5" stroke="#7f967f" stroke-dasharray="1 1"/>
<line x1="765" y1="320.5" x2="1133.5" y2="320.5" stroke="#7f967f" stroke-dasharray="1 1"/>
<line x1="765" y1="292.5" x2="1133.5" y2="292.5" stroke="#7f967f" stroke-dasharray="1 1"/>
<line x1="765" y1="264.5" x2="1133.5" y2="264.5" stroke="#7f967f" stroke-dasharray="1 1"/>
<line x1="765" y1="236.5" x2="1133.5" y2="236.5" stroke="#7f967f" stroke-dasharray="1 1"/>
<line x1="765" y1="208.5" x2="1133.5" y2="208.5" stroke="#7f967f" stroke-dasharray="1 1"/>
<line x1="765" y1="376.5" x2="1132.5" y2="376.5" stroke="#5a5a5a"/>
<polygon points="1132.0,372.5 1138.0,376.5 1132.0,380.5" fill="#ffffff"/>
<polygon points="762.2,205.5 765.5,199.5 768.8,205.5" fill="#ffffff"/>
<text transform="translate(757.5,380.7) scale(1,1.15)" font-size="11.0" fill="#c8c8c8" stroke="#c8c8c8" stroke-width="0.3" text-anchor="end" xml:space="preserve">0.0  </text>
<text transform="translate(757.5,352.7) scale(1,1.15)" font-size="11.0" fill="#c8c8c8" stroke="#c8c8c8" stroke-width="0.3" text-anchor="end" xml:space="preserve">0.2 k</text>
<text transform="translate(757.5,324.7) scale(1,1.15)" font-size="11.0" fill="#c8c8c8" stroke="#c8c8c8" stroke-width="0.3" text-anchor="end" xml:space="preserve">0.4 k</text>
<text transform="translate(757.5,296.7) scale(1,1.15)" font-size="11.0" fill="#c8c8c8" stroke="#c8c8c8" stroke-width="0.3" text-anchor="end" xml:space="preserve">0.6 k</text>
<text transform="translate(757.5,268.7) scale(1,1.15)" font-size="11.0" fill="#c8c8c8" stroke="#c8c8c8" stroke-width="0.3" text-anchor="end" xml:space="preserve">0.8 k</text>
<text transform="translate(757.5,240.7) scale(1,1.15)" font-size="11.0" fill="#c8c8c8" stroke="#c8c8c8" stroke-width="0.3" text-anchor="end" xml:space="preserve">1.0 k</text>
<text transform="translate(757.5,212.7) scale(1,1.15)" font-size="11.0" fill="#c8c8c8" stroke="#c8c8c8" stroke-width="0.3" text-anchor="end" xml:space="preserve">1.2 k</text>
<text transform="translate(814.3,390.6) scale(1,1.15)" font-size="11.0" fill="#c8c8c8" stroke="#c8c8c8" stroke-width="0.3" text-anchor="middle" xml:space="preserve">18:00</text>
<text transform="translate(905.5,390.6) scale(1,1.15)" font-size="11.0" fill="#c8c8c8" stroke="#c8c8c8" stroke-width="0.3" text-anchor="middle" xml:space="preserve">00:00</text>
<text transform="translate(996.8,390.6) scale(1,1.15)" font-size="11.0" fill="#c8c8c8" stroke="#c8c8c8" stroke-width="0.3" text-anchor="middle" xml:space="preserve">06:00</text>
<text transform="translate(1088.0,390.6) scale(1,1.15)" font-size="11.0" fill="#c8c8c8" stroke="#c8c8c8" stroke-width="0.3" text-anchor="middle" xml:space="preserve">12:00</text>
<text transform="translate(814.5,202.8) scale(1,1.15)" font-size="15.05" fill="#c8c8c8" stroke="#c8c8c8" stroke-width="0.3" text-anchor="start" xml:space="preserve">Disk I/O activity  (1day)</text>
<text transform="translate(704.5,292) rotate(-90) scale(1,1.12)" font-size="12.8" fill="#c8c8c8" text-anchor="middle">Reads+Writes/s</text>
<text transform="translate(1150,182) rotate(90) scale(1,1.1)" font-size="9.5" font-weight="bold" fill="#3c3c3c">RRDTOOL / TOBI OETIKER</text>
<path d="M765.5,375.2 L783.5,375.2 L786.0,369.5 L789.6,368.8 L793.0,370.5 L818.4,370.8 L826.0,375.2 L900.0,375.2 L1018.5,375.2 L1022.5,375.2 L1056.0,375.2 L1060.0,375.2 L1068.2,375.2 L1072.0,373.4 L1077.0,373.2 L1080.5,375.2 L1105.0,375.2 L1109.7,371.6 L1112.0,374.2 L1115.5,373.0 L1118.0,375.2 L1128.8,375.2" fill="none" stroke="#ee4444" stroke-width="2" stroke-linejoin="round"/>
<rect x="703.5" y="398.5" width="11" height="11" fill="#000000" />
<rect x="704.5" y="399.5" width="9" height="9" fill="#ee4444" />
<text transform="translate(719,408) scale(1,1.15)" font-size="11.0" fill="#c8c8c8" stroke="#c8c8c8" stroke-width="0.3" text-anchor="start" xml:space="preserve">/</text>
<text transform="translate(890.5,408) scale(1,1.15)" font-size="11.0" fill="#c8c8c8" stroke="#c8c8c8" stroke-width="0.3" text-anchor="start" xml:space="preserve">Cur:   16</text>
<text transform="translate(972.5,408) scale(1,1.15)" font-size="11.0" fill="#c8c8c8" stroke="#c8c8c8" stroke-width="0.3" text-anchor="start" xml:space="preserve">Min:    6</text>
<text transform="translate(1055.5,408) scale(1,1.15)" font-size="11.0" fill="#c8c8c8" stroke="#c8c8c8" stroke-width="0.3" text-anchor="start" xml:space="preserve">Max: 1071</text>
<rect x="703.5" y="412.0" width="11" height="11" fill="#000000" />
<rect x="704.5" y="413.0" width="9" height="9" fill="#dddddd" />
<text transform="translate(719,421.5) scale(1,1.15)" font-size="11.0" fill="#c8c8c8" stroke="#c8c8c8" stroke-width="0.3" text-anchor="start" xml:space="preserve">swap</text>
<text transform="translate(890.5,421.5) scale(1,1.15)" font-size="11.0" fill="#c8c8c8" stroke="#c8c8c8" stroke-width="0.3" text-anchor="start" xml:space="preserve">Cur:    0</text>
<text transform="translate(972.5,421.5) scale(1,1.15)" font-size="11.0" fill="#c8c8c8" stroke="#c8c8c8" stroke-width="0.3" text-anchor="start" xml:space="preserve">Min:    0</text>
<text transform="translate(1055.5,421.5) scale(1,1.15)" font-size="11.0" fill="#c8c8c8" stroke="#c8c8c8" stroke-width="0.3" text-anchor="start" xml:space="preserve">Max:    0</text>
<rect x="703.5" y="425.0" width="11" height="11" fill="#000000" />
<rect x="704.5" y="426.0" width="9" height="9" fill="#777777" />
<text transform="translate(719,434.5) scale(1,1.15)" font-size="11.0" fill="#c8c8c8" stroke="#c8c8c8" stroke-width="0.3" text-anchor="start" xml:space="preserve">/boot</text>
<text transform="translate(890.5,434.5) scale(1,1.15)" font-size="11.0" fill="#c8c8c8" stroke="#c8c8c8" stroke-width="0.3" text-anchor="start" xml:space="preserve">Cur:    0</text>
<text transform="translate(972.5,434.5) scale(1,1.15)" font-size="11.0" fill="#c8c8c8" stroke="#c8c8c8" stroke-width="0.3" text-anchor="start" xml:space="preserve">Min:    0</text>
<text transform="translate(1055.5,434.5) scale(1,1.15)" font-size="11.0" fill="#c8c8c8" stroke="#c8c8c8" stroke-width="0.3" text-anchor="start" xml:space="preserve">Max:    0</text>
<polygon points="1018,376 1019.8,226.5 1021.2,226.5 1023,376" fill="#ee4444"/>
<polygon points="1055.8,376 1057.4,268 1058.8,268 1060.3,376" fill="#ee4444"/>
<rect x="689" y="451" width="475" height="270" fill="#2c2c2c" />
<rect x="690" y="452" width="474" height="269" fill="#454545" />
<rect x="692" y="454" width="469" height="264" fill="#121212" />
<rect x="765" y="484" width="367.5" height="169" fill="#000000" />
<line x1="765" y1="646.5" x2="1132.5" y2="646.5" stroke="#3a2e20" stroke-dasharray="1 1"/>
<line x1="765" y1="640.5" x2="1132.5" y2="640.5" stroke="#3a2e20" stroke-dasharray="1 1"/>
<line x1="765" y1="635.5" x2="1132.5" y2="635.5" stroke="#3a2e20" stroke-dasharray="1 1"/>
<line x1="765" y1="629.5" x2="1132.5" y2="629.5" stroke="#3a2e20" stroke-dasharray="1 1"/>
<line x1="765" y1="618.5" x2="1132.5" y2="618.5" stroke="#3a2e20" stroke-dasharray="1 1"/>
<line x1="765" y1="612.5" x2="1132.5" y2="612.5" stroke="#3a2e20" stroke-dasharray="1 1"/>
<line x1="765" y1="607.5" x2="1132.5" y2="607.5" stroke="#3a2e20" stroke-dasharray="1 1"/>
<line x1="765" y1="601.5" x2="1132.5" y2="601.5" stroke="#3a2e20" stroke-dasharray="1 1"/>
<line x1="765" y1="590.5" x2="1132.5" y2="590.5" stroke="#3a2e20" stroke-dasharray="1 1"/>
<line x1="765" y1="584.5" x2="1132.5" y2="584.5" stroke="#3a2e20" stroke-dasharray="1 1"/>
<line x1="765" y1="579.5" x2="1132.5" y2="579.5" stroke="#3a2e20" stroke-dasharray="1 1"/>
<line x1="765" y1="573.5" x2="1132.5" y2="573.5" stroke="#3a2e20" stroke-dasharray="1 1"/>
<line x1="765" y1="562.5" x2="1132.5" y2="562.5" stroke="#3a2e20" stroke-dasharray="1 1"/>
<line x1="765" y1="556.5" x2="1132.5" y2="556.5" stroke="#3a2e20" stroke-dasharray="1 1"/>
<line x1="765" y1="551.5" x2="1132.5" y2="551.5" stroke="#3a2e20" stroke-dasharray="1 1"/>
<line x1="765" y1="545.5" x2="1132.5" y2="545.5" stroke="#3a2e20" stroke-dasharray="1 1"/>
<line x1="765" y1="534.5" x2="1132.5" y2="534.5" stroke="#3a2e20" stroke-dasharray="1 1"/>
<line x1="765" y1="528.5" x2="1132.5" y2="528.5" stroke="#3a2e20" stroke-dasharray="1 1"/>
<line x1="765" y1="523.5" x2="1132.5" y2="523.5" stroke="#3a2e20" stroke-dasharray="1 1"/>
<line x1="765" y1="517.5" x2="1132.5" y2="517.5" stroke="#3a2e20" stroke-dasharray="1 1"/>
<line x1="765" y1="506.5" x2="1132.5" y2="506.5" stroke="#3a2e20" stroke-dasharray="1 1"/>
<line x1="765" y1="500.5" x2="1132.5" y2="500.5" stroke="#3a2e20" stroke-dasharray="1 1"/>
<line x1="765" y1="495.5" x2="1132.5" y2="495.5" stroke="#3a2e20" stroke-dasharray="1 1"/>
<line x1="765" y1="489.5" x2="1132.5" y2="489.5" stroke="#3a2e20" stroke-dasharray="1 1"/>
<line x1="768.5" y1="484" x2="768.5" y2="653" stroke="#33301c" stroke-dasharray="1 1"/>
<line x1="783.5" y1="484" x2="783.5" y2="653" stroke="#33301c" stroke-dasharray="1 1"/>
<line x1="798.5" y1="484" x2="798.5" y2="653" stroke="#33301c" stroke-dasharray="1 1"/>
<line x1="813.5" y1="484" x2="813.5" y2="653" stroke="#33301c" stroke-dasharray="1 1"/>
<line x1="829.5" y1="484" x2="829.5" y2="653" stroke="#33301c" stroke-dasharray="1 1"/>
<line x1="844.5" y1="484" x2="844.5" y2="653" stroke="#33301c" stroke-dasharray="1 1"/>
<line x1="859.5" y1="484" x2="859.5" y2="653" stroke="#33301c" stroke-dasharray="1 1"/>
<line x1="874.5" y1="484" x2="874.5" y2="653" stroke="#33301c" stroke-dasharray="1 1"/>
<line x1="889.5" y1="484" x2="889.5" y2="653" stroke="#33301c" stroke-dasharray="1 1"/>
<line x1="905.5" y1="484" x2="905.5" y2="653" stroke="#33301c" stroke-dasharray="1 1"/>
<line x1="920.5" y1="484" x2="920.5" y2="653" stroke="#33301c" stroke-dasharray="1 1"/>
<line x1="935.5" y1="484" x2="935.5" y2="653" stroke="#33301c" stroke-dasharray="1 1"/>
<line x1="950.5" y1="484" x2="950.5" y2="653" stroke="#33301c" stroke-dasharray="1 1"/>
<line x1="965.5" y1="484" x2="965.5" y2="653" stroke="#33301c" stroke-dasharray="1 1"/>
<line x1="981.5" y1="484" x2="981.5" y2="653" stroke="#33301c" stroke-dasharray="1 1"/>
<line x1="996.5" y1="484" x2="996.5" y2="653" stroke="#33301c" stroke-dasharray="1 1"/>
<line x1="1011.5" y1="484" x2="1011.5" y2="653" stroke="#33301c" stroke-dasharray="1 1"/>
<line x1="1026.5" y1="484" x2="1026.5" y2="653" stroke="#33301c" stroke-dasharray="1 1"/>
<line x1="1041.5" y1="484" x2="1041.5" y2="653" stroke="#33301c" stroke-dasharray="1 1"/>
<line x1="1057.5" y1="484" x2="1057.5" y2="653" stroke="#33301c" stroke-dasharray="1 1"/>
<line x1="1072.5" y1="484" x2="1072.5" y2="653" stroke="#33301c" stroke-dasharray="1 1"/>
<line x1="1087.5" y1="484" x2="1087.5" y2="653" stroke="#33301c" stroke-dasharray="1 1"/>
<line x1="1102.5" y1="484" x2="1102.5" y2="653" stroke="#33301c" stroke-dasharray="1 1"/>
<line x1="1117.5" y1="484" x2="1117.5" y2="653" stroke="#33301c" stroke-dasharray="1 1"/>
<line x1="813.5" y1="484" x2="813.5" y2="656" stroke="#9cb09c" stroke-dasharray="1 1"/>
<line x1="905.5" y1="484" x2="905.5" y2="656" stroke="#9cb09c" stroke-dasharray="1 1"/>
<line x1="996.5" y1="484" x2="996.5" y2="656" stroke="#9cb09c" stroke-dasharray="1 1"/>
<line x1="1087.5" y1="484" x2="1087.5" y2="656" stroke="#9cb09c" stroke-dasharray="1 1"/>
<line x1="765" y1="624.5" x2="1133.5" y2="624.5" stroke="#7f967f" stroke-dasharray="1 1"/>
<line x1="765" y1="596.5" x2="1133.5" y2="596.5" stroke="#7f967f" stroke-dasharray="1 1"/>
<line x1="765" y1="568.5" x2="1133.5" y2="568.5" stroke="#7f967f" stroke-dasharray="1 1"/>
<line x1="765" y1="540.5" x2="1133.5" y2="540.5" stroke="#7f967f" stroke-dasharray="1 1"/>
<line x1="765" y1="512.5" x2="1133.5" y2="512.5" stroke="#7f967f" stroke-dasharray="1 1"/>
<line x1="765" y1="484.5" x2="1133.5" y2="484.5" stroke="#7f967f" stroke-dasharray="1 1"/>
<line x1="765" y1="652.5" x2="1132.5" y2="652.5" stroke="#5a5a5a"/>
<polygon points="1132.0,648.5 1138.0,652.5 1132.0,656.5" fill="#ffffff"/>
<polygon points="762.2,481.5 765.5,475.5 768.8,481.5" fill="#ffffff"/>
<text transform="translate(757.5,656.7) scale(1,1.15)" font-size="11.0" fill="#c8c8c8" stroke="#c8c8c8" stroke-width="0.3" text-anchor="end" xml:space="preserve">0</text>
<text transform="translate(757.5,628.7) scale(1,1.15)" font-size="11.0" fill="#c8c8c8" stroke="#c8c8c8" stroke-width="0.3" text-anchor="end" xml:space="preserve">100</text>
<text transform="translate(757.5,600.7) scale(1,1.15)" font-size="11.0" fill="#c8c8c8" stroke="#c8c8c8" stroke-width="0.3" text-anchor="end" xml:space="preserve">200</text>
<text transform="translate(757.5,572.7) scale(1,1.15)" font-size="11.0" fill="#c8c8c8" stroke="#c8c8c8" stroke-width="0.3" text-anchor="end" xml:space="preserve">300</text>
<text transform="translate(757.5,544.7) scale(1,1.15)" font-size="11.0" fill="#c8c8c8" stroke="#c8c8c8" stroke-width="0.3" text-anchor="end" xml:space="preserve">400</text>
<text transform="translate(757.5,516.7) scale(1,1.15)" font-size="11.0" fill="#c8c8c8" stroke="#c8c8c8" stroke-width="0.3" text-anchor="end" xml:space="preserve">500</text>
<text transform="translate(757.5,488.7) scale(1,1.15)" font-size="11.0" fill="#c8c8c8" stroke="#c8c8c8" stroke-width="0.3" text-anchor="end" xml:space="preserve">600</text>
<text transform="translate(814.3,666.6) scale(1,1.15)" font-size="11.0" fill="#c8c8c8" stroke="#c8c8c8" stroke-width="0.3" text-anchor="middle" xml:space="preserve">18:00</text>
<text transform="translate(905.5,666.6) scale(1,1.15)" font-size="11.0" fill="#c8c8c8" stroke="#c8c8c8" stroke-width="0.3" text-anchor="middle" xml:space="preserve">00:00</text>
<text transform="translate(996.8,666.6) scale(1,1.15)" font-size="11.0" fill="#c8c8c8" stroke="#c8c8c8" stroke-width="0.3" text-anchor="middle" xml:space="preserve">06:00</text>
<text transform="translate(1088.0,666.6) scale(1,1.15)" font-size="11.0" fill="#c8c8c8" stroke="#c8c8c8" stroke-width="0.3" text-anchor="middle" xml:space="preserve">12:00</text>
<text transform="translate(774,478.8) scale(1,1.15)" font-size="15.05" fill="#c8c8c8" stroke="#c8c8c8" stroke-width="0.3" text-anchor="start" xml:space="preserve">Time spent in I/O activity  (1day)</text>
<text transform="translate(704.5,568) rotate(-90) scale(1,1.12)" font-size="12.8" fill="#c8c8c8" text-anchor="middle">Milliseconds</text>
<text transform="translate(1150,458) rotate(90) scale(1,1.1)" font-size="9.5" font-weight="bold" fill="#3c3c3c">RRDTOOL / TOBI OETIKER</text>
<path d="M765.5,647.8 L767.1,647.6 L768.7,646.9 L770.3,647.8 L771.9,647.7 L773.5,647.6 L775.1,648.4 L776.7,647.7 L778.3,647.5 L779.9,647.2 L781.5,648.5 L783.1,648.1 L784.7,650.8 L786.3,649.4 L787.9,649.6 L789.5,650.9 L791.1,649.0 L792.7,649.1 L794.3,649.7 L795.9,649.8 L797.5,650.7 L799.1,650.9 L800.7,649.9 L802.3,650.8 L803.9,650.6 L805.5,650.5 L807.1,650.9 L808.7,650.1 L810.3,650.1 L811.9,649.3 L813.5,649.9 L815.1,649.7 L816.7,650.0 L818.3,649.7 L819.9,650.1 L821.5,650.4 L823.1,649.0 L824.7,649.0 L826.3,647.6 L827.9,647.9 L829.5,648.7 L831.1,648.8 L832.7,648.7 L834.3,649.1 L835.9,647.8 L837.5,648.5 L839.1,647.6 L840.7,648.5 L842.3,647.4 L843.9,647.6 L845.5,649.3 L847.1,648.9 L848.7,647.5 L850.3,648.4 L851.9,647.4 L853.5,648.5 L855.1,649.1 L856.7,648.0 L858.3,647.8 L859.9,648.8 L861.5,649.1 L863.1,648.6 L864.7,647.4 L866.3,647.8 L867.9,649.0 L869.5,648.8 L871.1,649.1 L872.7,649.2 L874.3,647.7 L875.9,648.9 L877.5,648.2 L879.1,648.4 L880.7,648.9 L882.3,647.8 L883.9,649.0 L885.5,648.0 L887.1,649.1 L888.7,648.5 L890.3,648.9 L891.9,648.8 L893.5,647.4 L895.1,647.7 L896.7,648.7 L898.3,647.5 L899.9,648.9 L901.5,648.5 L903.1,647.6 L904.7,648.0 L906.3,649.1 L907.9,647.3 L909.5,648.9 L911.1,648.8 L912.7,647.8 L914.3,648.6 L915.9,648.7 L917.5,649.1 L919.1,649.1 L920.7,648.1 L922.3,648.8 L923.9,648.1 L925.5,648.6 L927.1,648.4 L928.7,647.4 L930.3,648.3 L931.9,648.2 L933.5,647.6 L935.1,648.9 L936.7,649.0 L938.3,647.5 L939.9,647.7 L941.5,648.8 L943.1,648.9 L944.7,647.8 L946.3,647.4 L947.9,648.9 L949.5,647.4 L951.1,647.6 L952.7,648.1 L954.3,648.5 L955.9,649.1 L957.5,649.2 L959.1,647.4 L960.7,648.8 L962.3,647.9 L963.9,648.8 L965.5,647.7 L967.1,648.1 L968.7,648.7 L970.3,648.9 L971.9,647.9 L973.5,649.1 L975.1,648.8 L976.7,648.2 L978.3,647.6 L979.9,648.1 L981.5,648.7 L983.1,647.5 L984.7,648.9 L986.3,649.2 L987.9,648.8 L989.5,648.4 L991.1,649.2 L992.7,648.9 L994.3,648.6 L995.9,648.2 L997.5,649.0 L999.1,648.6 L1000.7,647.5 L1002.3,647.4 L1003.9,648.0 L1005.5,647.9 L1007.1,648.1 L1008.7,649.0 L1010.3,649.2 L1011.9,649.2 L1013.5,647.5 L1015.1,647.9 L1016.7,647.4 L1018.5,648.3 L1020.9,624.5 L1023.5,648.3 L1024.7,648.7 L1026.3,647.3 L1027.9,649.1 L1029.5,648.2 L1031.1,647.8 L1032.7,647.5 L1034.3,647.8 L1035.9,647.9 L1037.5,647.7 L1039.1,647.5 L1040.7,648.6 L1042.3,647.9 L1043.9,647.5 L1045.5,647.6 L1047.1,648.5 L1048.7,647.7 L1050.3,647.6 L1051.9,648.2 L1053.5,648.1 L1055.5,648.3 L1061.0,648.3 L1061.5,648.0 L1063.1,647.3 L1064.5,648.0 L1065.7,644.1 L1067.0,648.0 L1067.9,648.5 L1069.5,647.8 L1071.1,648.1 L1072.7,645.3 L1074.3,644.6 L1075.9,646.0 L1077.5,644.7 L1079.1,646.1 L1080.7,645.0 L1082.3,645.3 L1083.9,645.7 L1085.5,647.9 L1087.1,648.3 L1088.7,648.1 L1090.3,647.5 L1091.9,648.8 L1093.5,649.3 L1095.1,648.7 L1096.7,648.0 L1098.3,648.9 L1099.9,648.9 L1101.5,647.5 L1103.1,648.0 L1104.7,648.4 L1106.3,647.5 L1107.5,648.0 L1109.5,641.9 L1111.5,648.6 L1112.7,648.4 L1114.3,647.7 L1115.9,647.5 L1117.5,647.6 L1119.1,648.5 L1120.7,648.1 L1122.3,648.7 L1123.9,649.0 L1125.5,648.3 L1127.1,647.6 L1128.7,647.6" fill="none" stroke="#ee4444" stroke-width="2" stroke-linejoin="round"/>
<rect x="703.5" y="674.5" width="11" height="11" fill="#000000" />
<rect x="704.5" y="675.5" width="9" height="9" fill="#ee4444" />
<text transform="translate(719,684) scale(1,1.15)" font-size="11.0" fill="#c8c8c8" stroke="#c8c8c8" stroke-width="0.3" text-anchor="start" xml:space="preserve">/</text>
<text transform="translate(890.5,684) scale(1,1.15)" font-size="11.0" fill="#c8c8c8" stroke="#c8c8c8" stroke-width="0.3" text-anchor="start" xml:space="preserve">Cur:  0.0s</text>
<text transform="translate(972.5,684) scale(1,1.15)" font-size="11.0" fill="#c8c8c8" stroke="#c8c8c8" stroke-width="0.3" text-anchor="start" xml:space="preserve">Min:  0.0s</text>
<text transform="translate(1055.5,684) scale(1,1.15)" font-size="11.0" fill="#c8c8c8" stroke="#c8c8c8" stroke-width="0.3" text-anchor="start" xml:space="preserve">Max:  0.6s</text>
<rect x="703.5" y="688.0" width="11" height="11" fill="#000000" />
<rect x="704.5" y="689.0" width="9" height="9" fill="#dddddd" />
<text transform="translate(719,697.5) scale(1,1.15)" font-size="11.0" fill="#c8c8c8" stroke="#c8c8c8" stroke-width="0.3" text-anchor="start" xml:space="preserve">swap</text>
<text transform="translate(890.5,697.5) scale(1,1.15)" font-size="11.0" fill="#c8c8c8" stroke="#c8c8c8" stroke-width="0.3" text-anchor="start" xml:space="preserve">Cur:  0.0s</text>
<text transform="translate(972.5,697.5) scale(1,1.15)" font-size="11.0" fill="#c8c8c8" stroke="#c8c8c8" stroke-width="0.3" text-anchor="start" xml:space="preserve">Min:  0.0s</text>
<text transform="translate(1055.5,697.5) scale(1,1.15)" font-size="11.0" fill="#c8c8c8" stroke="#c8c8c8" stroke-width="0.3" text-anchor="start" xml:space="preserve">Max:  0.0s</text>
<rect x="703.5" y="701.0" width="11" height="11" fill="#000000" />
<rect x="704.5" y="702.0" width="9" height="9" fill="#777777" />
<text transform="translate(719,710.5) scale(1,1.15)" font-size="11.0" fill="#c8c8c8" stroke="#c8c8c8" stroke-width="0.3" text-anchor="start" xml:space="preserve">/boot</text>
<text transform="translate(890.5,710.5) scale(1,1.15)" font-size="11.0" fill="#c8c8c8" stroke="#c8c8c8" stroke-width="0.3" text-anchor="start" xml:space="preserve">Cur:  0.0s</text>
<text transform="translate(972.5,710.5) scale(1,1.15)" font-size="11.0" fill="#c8c8c8" stroke="#c8c8c8" stroke-width="0.3" text-anchor="start" xml:space="preserve">Min:  0.0s</text>
<text transform="translate(1055.5,710.5) scale(1,1.15)" font-size="11.0" fill="#c8c8c8" stroke="#c8c8c8" stroke-width="0.3" text-anchor="start" xml:space="preserve">Max:  0.0s</text>
<polygon points="1056,649 1057.6,493 1059,493 1060.6,649" fill="#ee4444"/>
<rect x="202" y="749" width="967" height="200" fill="#8c8c8c" />
<rect x="209" y="756" width="954" height="21" fill="#333333" />
<text x="219.3" y="773" font-family="'Liberation Sans', sans-serif" font-weight="bold" font-size="18" fill="#9a9f1c">eth0 Network traffic and usage</text>
<rect x="209" y="784" width="614" height="116" fill="#2c2c2c" />
<rect x="210" y="785" width="613" height="115" fill="#454545" />
<rect x="212" y="787" width="608" height="110" fill="#121212" />
<rect x="284" y="816" width="506.79999999999995" height="23" fill="#000000" />
<line x1="290.5" y1="816" x2="290.5" y2="839" stroke="#33301c" stroke-dasharray="1 1"/>
<line x1="311.5" y1="816" x2="311.5" y2="839" stroke="#33301c" stroke-dasharray="1 1"/>
<line x1="332.5" y1="816" x2="332.5" y2="839" stroke="#33301c" stroke-dasharray="1 1"/>
<line x1="353.5" y1="816" x2="353.5" y2="839" stroke="#33301c" stroke-dasharray="1 1"/>
<line x1="374.5" y1="816" x2="374.5" y2="839" stroke="#33301c" stroke-dasharray="1 1"/>
<line x1="395.5" y1="816" x2="395.5" y2="839" stroke="#33301c" stroke-dasharray="1 1"/>
<line x1="416.5" y1="816" x2="416.5" y2="839" stroke="#33301c" stroke-dasharray="1 1"/>
<line x1="437.5" y1="816" x2="437.5" y2="839" stroke="#33301c" stroke-dasharray="1 1"/>
<line x1="458.5" y1="816" x2="458.5" y2="839" stroke="#33301c" stroke-dasharray="1 1"/>
<line x1="480.5" y1="816" x2="480.5" y2="839" stroke="#33301c" stroke-dasharray="1 1"/>
<line x1="501.5" y1="816" x2="501.5" y2="839" stroke="#33301c" stroke-dasharray="1 1"/>
<line x1="522.5" y1="816" x2="522.5" y2="839" stroke="#33301c" stroke-dasharray="1 1"/>
<line x1="543.5" y1="816" x2="543.5" y2="839" stroke="#33301c" stroke-dasharray="1 1"/>
<line x1="564.5" y1="816" x2="564.5" y2="839" stroke="#33301c" stroke-dasharray="1 1"/>
<line x1="585.5" y1="816" x2="585.5" y2="839" stroke="#33301c" stroke-dasharray="1 1"/>
<line x1="606.5" y1="816" x2="606.5" y2="839" stroke="#33301c" stroke-dasharray="1 1"/>
<line x1="627.5" y1="816" x2="627.5" y2="839" stroke="#33301c" stroke-dasharray="1 1"/>
<line x1="648.5" y1="816" x2="648.5" y2="839" stroke="#33301c" stroke-dasharray="1 1"/>
<line x1="669.5" y1="816" x2="669.5" y2="839" stroke="#33301c" stroke-dasharray="1 1"/>
<line x1="690.5" y1="816" x2="690.5" y2="839" stroke="#33301c" stroke-dasharray="1 1"/>
<line x1="712.5" y1="816" x2="712.5" y2="839" stroke="#33301c" stroke-dasharray="1 1"/>
<line x1="733.5" y1="816" x2="733.5" y2="839" stroke="#33301c" stroke-dasharray="1 1"/>
<line x1="754.5" y1="816" x2="754.5" y2="839" stroke="#33301c" stroke-dasharray="1 1"/>
<line x1="775.5" y1="816" x2="775.5" y2="839" stroke="#33301c" stroke-dasharray="1 1"/>
<line x1="353.5" y1="816" x2="353.5" y2="839" stroke="#9cb09c" stroke-dasharray="1 1"/>
<line x1="480.5" y1="816" x2="480.5" y2="839" stroke="#9cb09c" stroke-dasharray="1 1"/>
<line x1="606.5" y1="816" x2="606.5" y2="839" stroke="#9cb09c" stroke-dasharray="1 1"/>
<line x1="733.5" y1="816" x2="733.5" y2="839" stroke="#9cb09c" stroke-dasharray="1 1"/>
<line x1="284" y1="833.5" x2="791.8" y2="833.5" stroke="#7f967f" stroke-dasharray="1 1"/>
<line x1="284" y1="816.5" x2="791.8" y2="816.5" stroke="#7f967f" stroke-dasharray="1 1"/>
<polygon points="281.2,813.5 284.5,807.5 287.8,813.5" fill="#ffffff"/>
<text transform="translate(276.5,821.2) scale(1,1.15)" font-size="11.0" fill="#c8c8c8" stroke="#c8c8c8" stroke-width="0.3" text-anchor="end" xml:space="preserve">1.0</text>
<text transform="translate(276.5,838.0) scale(1,1.15)" font-size="11.0" fill="#c8c8c8" stroke="#c8c8c8" stroke-width="0.3" text-anchor="end" xml:space="preserve">0.9</text>
<text transform="translate(386,811.5) scale(1,1.15)" font-size="15.05" fill="#c8c8c8" stroke="#c8c8c8" stroke-width="0.3" text-anchor="start" xml:space="preserve">eth0 FastEthernet LAN  (1day)</text>
<text transform="translate(809.5,791) rotate(90) scale(1,1.1)" font-size="9.5" font-weight="bold" fill="#3c3c3c">RRDTOOL / TOBI OETIKER</text>
<rect x="830" y="784" width="333" height="116" fill="#2c2c2c" />
<rect x="831" y="785" width="332" height="115" fill="#454545" />
<rect x="833" y="787" width="327" height="110" fill="#121212" />
<rect x="903" y="813" width="227.79999999999995" height="26" fill="#000000" />
<line x1="903" y1="834.5" x2="1130.8" y2="834.5" stroke="#3a2e20" stroke-dasharray="1 1"/>
<line x1="903" y1="820.5" x2="1130.8" y2="820.5" stroke="#3a2e20" stroke-dasharray="1 1"/>
<line x1="905.5" y1="813" x2="905.5" y2="839" stroke="#33301c" stroke-dasharray="1 1"/>
<line x1="915.5" y1="813" x2="915.5" y2="839" stroke="#33301c" stroke-dasharray="1 1"/>
<line x1="924.5" y1="813" x2="924.5" y2="839" stroke="#33301c" stroke-dasharray="1 1"/>
<line x1="934.5" y1="813" x2="934.5" y2="839" stroke="#33301c" stroke-dasharray="1 1"/>
<line x1="943.5" y1="813" x2="943.5" y2="839" stroke="#33301c" stroke-dasharray="1 1"/>
<line x1="952.5" y1="813" x2="952.5" y2="839" stroke="#33301c" stroke-dasharray="1 1"/>
<line x1="962.5" y1="813" x2="962.5" y2="839" stroke="#33301c" stroke-dasharray="1 1"/>
<line x1="971.5" y1="813" x2="971.5" y2="839" stroke="#33301c" stroke-dasharray="1 1"/>
<line x1="981.5" y1="813" x2="981.5" y2="839" stroke="#33301c" stroke-dasharray="1 1"/>
<line x1="990.5" y1="813" x2="990.5" y2="839" stroke="#33301c" stroke-dasharray="1 1"/>
<line x1="999.5" y1="813" x2="999.5" y2="839" stroke="#33301c" stroke-dasharray="1 1"/>
<line x1="1009.5" y1="813" x2="1009.5" y2="839" stroke="#33301c" stroke-dasharray="1 1"/>
<line x1="1018.5" y1="813" x2="1018.5" y2="839" stroke="#33301c" stroke-dasharray="1 1"/>
<line x1="1028.5" y1="813" x2="1028.5" y2="839" stroke="#33301c" stroke-dasharray="1 1"/>
<line x1="1037.5" y1="813" x2="1037.5" y2="839" stroke="#33301c" stroke-dasharray="1 1"/>
<line x1="1046.5" y1="813" x2="1046.5" y2="839" stroke="#33301c" stroke-dasharray="1 1"/>
<line x1="1056.5" y1="813" x2="1056.5" y2="839" stroke="#33301c" stroke-dasharray="1 1"/>
<line x1="1065.5" y1="813" x2="1065.5" y2="839" stroke="#33301c" stroke-dasharray="1 1"/>
<line x1="1075.5" y1="813" x2="1075.5" y2="839" stroke="#33301c" stroke-dasharray="1 1"/>
<line x1="1084.5" y1="813" x2="1084.5" y2="839" stroke="#33301c" stroke-dasharray="1 1"/>
<line x1="1093.5" y1="813" x2="1093.5" y2="839" stroke="#33301c" stroke-dasharray="1 1"/>
<line x1="1103.5" y1="813" x2="1103.5" y2="839" stroke="#33301c" stroke-dasharray="1 1"/>
<line x1="1112.5" y1="813" x2="1112.5" y2="839" stroke="#33301c" stroke-dasharray="1 1"/>
<line x1="1122.5" y1="813" x2="1122.5" y2="839" stroke="#33301c" stroke-dasharray="1 1"/>
<line x1="934.5" y1="813" x2="934.5" y2="839" stroke="#9cb09c" stroke-dasharray="1 1"/>
<line x1="990.5" y1="813" x2="990.5" y2="839" stroke="#9cb09c" stroke-dasharray="1 1"/>
<line x1="1046.5" y1="813" x2="1046.5" y2="839" stroke="#9cb09c" stroke-dasharray="1 1"/>
<line x1="1103.5" y1="813" x2="1103.5" y2="839" stroke="#9cb09c" stroke-dasharray="1 1"/>
<line x1="903" y1="828.5" x2="1131.8" y2="828.5" stroke="#7f967f" stroke-dasharray="1 1"/>
<line x1="903" y1="813.5" x2="1131.8" y2="813.5" stroke="#7f967f" stroke-dasharray="1 1"/>
<polygon points="900.2,810.5 903.5,804.5 906.8,810.5" fill="#ffffff"/>
<text transform="translate(886.2,808.3) scale(1,1.15)" font-size="13.2" fill="#c8c8c8" stroke="#c8c8c8" stroke-width="0.3" text-anchor="start" xml:space="preserve">eth0 Network packets  (1day)</text>
<text transform="translate(896,817.2) scale(1,1.15)" font-size="11.0" fill="#c8c8c8" stroke="#c8c8c8" stroke-width="0.3" text-anchor="end" xml:space="preserve">1.0</text>
<text transform="translate(847.8,830) rotate(-90) scale(1,1.12)" font-size="11.2" fill="#c8c8c8" text-anchor="middle">s/s</text>
<text transform="translate(1149.5,791) rotate(90) scale(1,1.1)" font-size="9.5" font-weight="bold" fill="#3c3c3c">RRDTOOL / TOBI OETIKER</text>
</svg>
</body></html>
